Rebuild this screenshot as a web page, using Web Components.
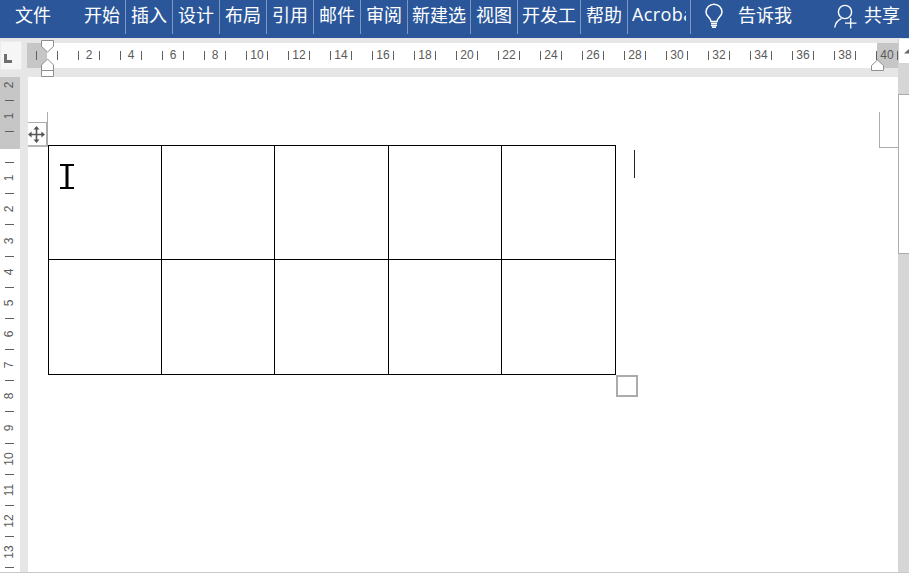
<!DOCTYPE html>
<html lang="zh-CN">
<head>
<meta charset="utf-8">
<title>Word</title>
<style>
html,body{margin:0;padding:0;width:909px;height:573px;overflow:hidden;background:#fff}
body{font-family:"Liberation Sans","Noto Sans CJK SC",sans-serif}
</style>
</head>
<body>
<word-app></word-app>
<script>
function shell(el, html){ el.attachShadow({mode:'open'}).innerHTML = html; }

class WordTabbar extends HTMLElement{
  constructor(){
    super();
    const tabs=[['开始',47],['插入',47],['设计',47],['布局',47],['引用',47],['邮件',47],['审阅',47],['新建选',63],['视图',47],['开发工',63],['帮助',47]];
    shell(this,`<style>
      :host{display:flex;height:38px;background:#2b579a;color:#fff;font:18px/29px "Noto Sans CJK SC","Noto Sans CJK TC",sans-serif;align-items:flex-start;overflow:hidden}
      .file{width:79px;height:34px;padding-left:15px;box-sizing:border-box;flex:none}
      .tab{height:34px;box-sizing:border-box;border-right:1px solid #7b98c4;text-align:center;flex:none;white-space:nowrap}
      .acro{width:63px;padding-left:4px;text-align:left;font-family:"Open Sans",sans-serif;letter-spacing:.4px}
      .acro span{display:block;width:54px;overflow:hidden}
      svg{display:block;flex:none}
      .bulb{margin:3px 0 0 13px}
      .tell{margin-left:14px;width:54px;flex:none;white-space:nowrap}
      .user{margin:4px 0 0 42px}
      .share{margin-left:6px;flex:none;white-space:nowrap}
    </style>
    <div class="file">文件</div>
    ${tabs.map(t=>`<div class="tab" style="width:${t[1]}px">${t[0]}</div>`).join('')}
    <div class="tab acro"><span>Acrobat</span></div>
    <svg class="bulb" width="20" height="25" viewBox="0 0 20 25" fill="none" stroke="#fff" stroke-width="1.5">
      <path d="M7 18.5C7 15 2 13.5 2 9.2A8 8 0 0 1 18 9.2C18 13.5 13 15 13 18.5Z"/>
      <path d="M7 20.5H13M7 22.5H13M8 24.2H12"/>
    </svg>
    <div class="tell">告诉我</div>
    <svg class="user" width="24" height="25" viewBox="0 0 24 25" fill="none" stroke="#fff" stroke-width="1.4">
      <circle cx="11" cy="8" r="6.6"/>
      <path d="M0.7 23.5C1.5 19 4 16 7.5 14.6"/>
      <path d="M11 19.2H22.5M16.7 14V24.5" stroke-width="1.3"/>
    </svg>
    <div class="share">共享</div>`);
  }
}

class WordHruler extends HTMLElement{
  constructor(){
    super();
    let cells='';
    for(let i=0;i<=20;i++){
      cells+=`<div class="cell"><i></i><b>${i?i*2:''}</b><i></i></div>`;
    }
    shell(this,`<style>
      :host{display:flex;height:39px;box-sizing:border-box;padding-top:3px;background:#e6e6e6;position:relative;width:898px;overflow:hidden}
      .corner{width:22px;height:29px;margin-top:0;background:#f6f6f6;flex:none;box-sizing:border-box;border:1px solid #ececec;display:flex;align-items:flex-end;padding:0 0 6px 3px}
      .l{width:8px;height:9px;display:block}
      .track{margin:2px 0 0 5px;width:871px;height:25px;flex:none;display:flex;padding-left:9px;box-sizing:border-box;overflow:hidden;
        background:linear-gradient(to right,#c6c6c6 20px,#fff 20px,#fff 850px,#c6c6c6 850px)}
      .cell{flex:none;width:42px;display:flex;align-items:center}
      i{display:block;width:1px;height:9px;background:#5f5f5f;flex:none}
      b{display:block;font:12px/25px "Liberation Sans",sans-serif;color:#5a5a5a;width:20px;text-align:center;flex:none}
      svg.m{position:absolute;left:0;top:0}
    </style>
    <div class="corner"><svg class="l" viewBox="0 0 8 9"><path d="M0 0H3V6H8V9H0Z" fill="#6f6f6f"/></svg></div>
    <div class="track">${cells}</div>
    <svg class="m" width="898" height="39" viewBox="0 38 898 39" fill="#fff" stroke="#8f8f8f" stroke-width="1">
      <path d="M41.5 40.5H53.5V46.5L47.5 52L41.5 46.5Z"/>
      <path d="M47.5 59L53.5 65V76.5H41.5V65Z"/>
      <path d="M41.5 70.5H53.5" fill="none"/>
      <path d="M877.5 60L883.5 65.5V70.5H871.5V65.5Z"/>
    </svg>`);
  }
}

class WordVruler extends HTMLElement{
  constructor(){
    super();
    const seq=['2','-','1','-','','-','1','-','2','-','3','-','4','-','5','-','6','-','7','-','8','-','9','-','10','-','11','-','12','-','13','-'];
    shell(this,`<style>
      :host{display:block;flex:none;width:28px;height:495px;box-sizing:border-box;border-right:8px solid #e6e6e6;overflow:hidden;
        background:linear-gradient(to bottom,#c6c6c6 72px,#fff 72px)}
      .r{height:15.58px;display:flex;align-items:center;justify-content:center;padding-right:2px;overflow:visible}
      .t{width:9px;height:1px;background:#5f5f5f}
      .n{font:12px/12px "Liberation Sans",sans-serif;color:#5a5a5a;transform:rotate(-90deg);white-space:nowrap;flex:none}
    </style>
    ${seq.map(s=>`<div class="r">${s==='-'?'<div class="t"></div>':s?`<div class="n">${s}</div>`:''}</div>`).join('')}`);
  }
}

class WordTable extends HTMLElement{
  constructor(){
    super();
    const cols=[113,113,114,113,114], rows=[114,115];
    let cells='';
    for(let r=0;r<2;r++) for(let c=0;c<5;c++) cells+='<div class="c"></div>';
    shell(this,`<style>
      :host{display:grid;width:568px;box-sizing:border-box;border-top:1px solid #000;border-left:1px solid #000;
        grid-template-columns:${cols.map(x=>x+'px').join(' ')};grid-template-rows:${rows.map(x=>x+'px').join(' ')}}
      .c{box-sizing:border-box;border-right:1px solid #000;border-bottom:1px solid #000}
    </style>${cells}`);
  }
}

class WordPage extends HTMLElement{
  constructor(){
    super();
    shell(this,`<style>
      :host{display:block;flex:1;position:relative;background:#fff;padding:68px 0 0 20px;box-sizing:border-box;height:495px;overflow:hidden}
      .cropL{position:absolute;left:19px;top:35px;width:1px;height:34px;background:#ababab}
      .handle{position:absolute;left:0;top:45px;width:20px;height:25px;box-sizing:border-box;background:#fff;border-top:1px solid #ababab;border-right:2px solid #ababab;border-bottom:2px solid #b8b8b8;display:flex;align-items:center;justify-content:flex-start}
      .cropR{position:absolute;left:851px;top:35px;width:19px;height:36px;box-sizing:border-box;border-left:1px solid #ababab;border-bottom:1px solid #ababab}
      .caret{position:absolute;left:606px;top:73px;width:1px;height:28px;background:#222}
      .resize{position:absolute;left:588px;top:298px;width:22px;height:22px;box-sizing:border-box;border:2px solid #ababab;background:#fff}
      .ibeam{position:absolute;left:32px;top:87px}
      svg{display:block;flex:none}
    </style>
    <div class="cropL"></div>
    <div class="cropR"></div>
    <slot></slot>
    <div class="handle"><svg width="17" height="17" viewBox="0 0 17 17" fill="#555" stroke="none">
      <path d="M7.7 3H9.3V7.7H14V9.3H9.3V14H7.7V9.3H3V7.7H7.7Z"/>
      <path d="M8.5 0L11.5 3.6H5.5ZM8.5 17L11.5 13.4H5.5ZM0 8.5L3.6 5.5V11.5ZM17 8.5L13.4 5.5V11.5Z"/>
    </svg></div>
    <div class="caret"></div>
    <div class="resize"></div>
    <svg class="ibeam" width="15" height="26" viewBox="0 0 15 26"><path d="M0 1H14M0 24H14" stroke="#000" stroke-width="2"/><path d="M7 1V24" stroke="#000" stroke-width="3"/></svg>`);
  }
}

class WordScrollbar extends HTMLElement{
  constructor(){
    super();
    shell(this,`<style>
      :host{display:flex;flex-direction:column;width:11px;height:534px;box-sizing:border-box;padding-top:1px;background:#e6e6e6;flex:none}
      .up{height:24px;background:#fff;box-sizing:border-box;border-left:1px solid #d0d0d0;flex:none;display:flex;justify-content:flex-end;padding-top:10px}
      .up svg{display:block}
      .gap{height:31px;background:#d6d6d6;flex:none}
      .thumb{height:160px;background:#fff;box-sizing:border-box;border:1px solid #ababab;border-right:none;flex:none}
      .rest{flex:1;background:#d6d6d6}
    </style>
    <div class="up"><svg width="5" height="5" viewBox="0 0 5 5"><path d="M0 4.5L5 0V4.5Z" fill="#666"/></svg></div>
    <div class="gap"></div><div class="thumb"></div><div class="rest"></div>`);
  }
}

class WordApp extends HTMLElement{
  constructor(){
    super();
    shell(this,`<style>
      :host{display:block;width:909px;height:573px;overflow:hidden;position:relative}
      .work{display:flex;height:534px}
      .left{width:898px;flex:none;display:flex;flex-direction:column}
      .body{display:flex;height:495px}
      .foot{height:1px;background:#c8c8c8}
    </style>
    <word-tabbar></word-tabbar>
    <div class="work">
      <div class="left">
        <word-hruler></word-hruler>
        <div class="body"><word-vruler></word-vruler><word-page><word-table></word-table></word-page></div>
      </div>
      <word-scrollbar></word-scrollbar>
    </div>
    <div class="foot"></div>`);
  }
}

customElements.define('word-tabbar',WordTabbar);
customElements.define('word-hruler',WordHruler);
customElements.define('word-vruler',WordVruler);
customElements.define('word-table',WordTable);
customElements.define('word-page',WordPage);
customElements.define('word-scrollbar',WordScrollbar);
customElements.define('word-app',WordApp);
</script>
</body>
</html>
